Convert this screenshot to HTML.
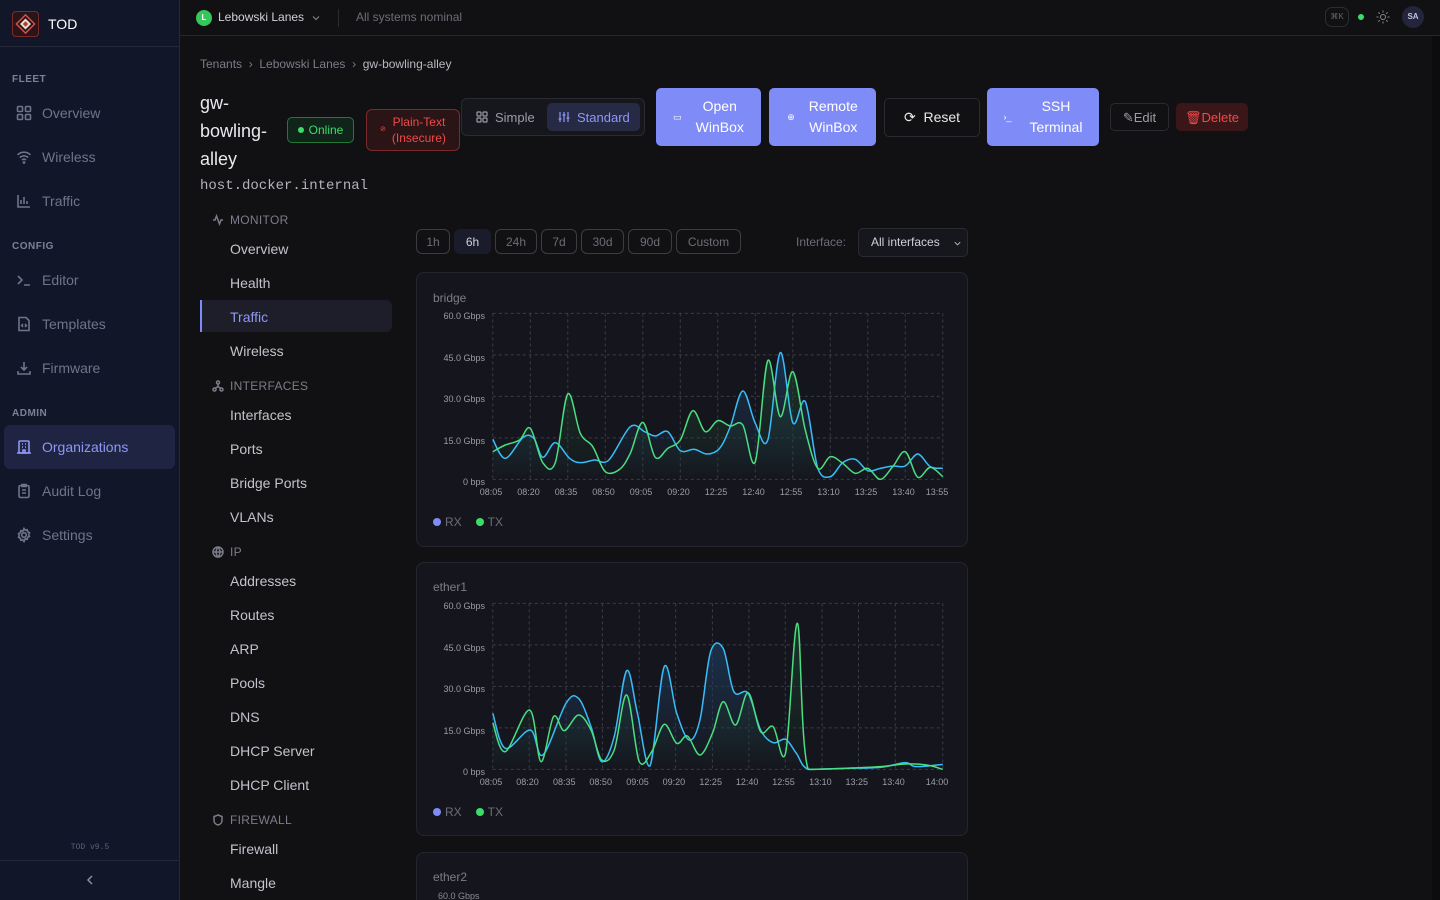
<!DOCTYPE html>
<html style="overflow:hidden"><head><meta charset="utf-8"><style>
*{box-sizing:border-box;margin:0;padding:0}
html,body{width:1440px;height:900px;overflow:hidden}
body{background:#111113;font-family:"Liberation Sans",sans-serif;color:#c9cad4;position:relative}
.abs{position:absolute}
#side{left:0;top:0;width:180px;height:900px;background:#111729;border-right:1px solid #23283a}
.sec{position:absolute;left:12px;font-size:10px;letter-spacing:.5px;color:#7c8296;font-weight:bold}
.ni{position:absolute;left:16px;font-size:14px;color:#6f7589;display:flex;align-items:center;gap:10px}
.ni svg{width:16px;height:16px;stroke:#6f7589;fill:none;stroke-width:1.6}
#top{left:180px;top:0;right:0;height:36px;border-bottom:1px solid #26262c}
.sub{position:absolute;left:230px;font-size:14px;color:#c2c3cc}
.subh{position:absolute;left:212px;font-size:12px;color:#7c7d8a;letter-spacing:.3px;display:flex;align-items:center;gap:6px}
.subh svg{width:12px;height:12px;stroke:#7c7d8a;fill:none;stroke-width:1.5}
.btn{position:absolute;border-radius:5px;font-size:14px;display:flex;align-items:center;justify-content:center;text-align:center;line-height:21px}
.pb{background:#7f8cf7;color:#fff}
.tr{position:absolute;top:229px;height:25px;border:1px solid #3c3d44;border-radius:6px;font-size:12px;color:#6c6d77;display:flex;align-items:center;justify-content:center}
.card{position:absolute;left:416px;width:552px;background:#15161d;border:1px solid #24252e;border-radius:8px}
.ct{position:absolute;left:16px;font-size:12px;color:#7c7d8a}
.lg{position:absolute;left:16px;font-size:12px;color:#6c6d77;display:flex;gap:14px}
.lg span::before{content:"";display:inline-block;width:8px;height:8px;border-radius:50%;margin-right:4px;background:var(--c)}
.ax{position:absolute;font-size:9px;color:#9a9ba6;white-space:nowrap}
</style></head><body>
<div id="side" class="abs">
 <div class="abs" style="left:0;top:0;width:179px;height:47px;border-bottom:1px solid #23283a"></div>
 <div class="abs" style="left:12px;top:11px;width:27px;height:26px;border:1.5px solid #7a2a2a;border-radius:4px;background:#2a1418"></div>
 <svg class="abs" style="left:14px;top:13px" width="23" height="22" viewBox="0 0 24 24"><path d="M12 2L22 12 12 22 2 12Z" fill="none" stroke="#d9534f" stroke-width="1.5"/><path d="M12 6L18 12 12 18 6 12Z" fill="#e8e0d0"/><path d="M12 9L15 12 12 15 9 12Z" fill="#c0392b"/></svg>
 <div class="abs" style="left:48px;top:16px;font-size:14px;color:#fff">TOD</div>
 <div class="sec" style="top:74px">FLEET</div>
 <div class="ni" style="top:105px"><svg viewBox="0 0 16 16"><rect x="1.5" y="1.5" width="5" height="5" rx="1"/><rect x="9.5" y="1.5" width="5" height="5" rx="1"/><rect x="1.5" y="9.5" width="5" height="5" rx="1"/><rect x="9.5" y="9.5" width="5" height="5" rx="1"/></svg>Overview</div>
 <div class="ni" style="top:149px"><svg viewBox="0 0 16 16"><path d="M1.5 6a9 9 0 0 1 13 0M3.8 8.6a6 6 0 0 1 8.4 0M6 11a3 3 0 0 1 4 0"/><circle cx="8" cy="13.5" r=".6"/></svg>Wireless</div>
 <div class="ni" style="top:193px"><svg viewBox="0 0 16 16"><path d="M2 2v12h12M5 11V7M8 11V4M11 11V8"/></svg>Traffic</div>
 <div class="sec" style="top:241px">CONFIG</div>
 <div class="ni" style="top:272px"><svg viewBox="0 0 16 16"><path d="M2 4l4 4-4 4M8 13h6"/></svg>Editor</div>
 <div class="ni" style="top:316px"><svg viewBox="0 0 16 16"><path d="M3 1.5h7l3 3v10H3z"/><path d="M7 8l-1.3 1.5L7 11M9 8l1.3 1.5L9 11"/></svg>Templates</div>
 <div class="ni" style="top:360px"><svg viewBox="0 0 16 16"><path d="M8 2v8M5 7l3 3 3-3M2 11v3h12v-3"/></svg>Firmware</div>
 <div class="sec" style="top:408px">ADMIN</div>
 <div class="abs" style="left:4px;top:425px;width:171px;height:44px;background:#1e2442;border-radius:6px"></div>
 <div class="ni" style="top:439px;color:#8e98f5"><svg viewBox="0 0 16 16" style="stroke:#8e98f5"><rect x="3" y="2" width="10" height="12" rx="1"/><path d="M1 14h14M6 5h1M9 5h1M6 8h1M9 8h1M7 14v-3h2v3"/></svg>Organizations</div>
 <div class="ni" style="top:483px"><svg viewBox="0 0 16 16"><rect x="3" y="2.5" width="10" height="12" rx="1.5"/><path d="M6 1.5h4v2H6zM6 7h4M6 10h4"/></svg>Audit Log</div>
 <div class="ni" style="top:527px"><svg viewBox="0 0 16 16"><circle cx="8" cy="8" r="2.3"/><path d="M8 1.5l1.2 1.7 2-.5.4 2 1.9.9-.8 1.9.8 1.9-1.9.9-.4 2-2-.5L8 14.5l-1.2-1.7-2 .5-.4-2-1.9-.9.8-1.9-.8-1.9 1.9-.9.4-2 2 .5z"/></svg>Settings</div>
 <div class="abs" style="left:0;width:180px;top:843px;text-align:center;font-family:'Liberation Mono',monospace;font-size:8px;color:#5c6276">TOD v9.5</div>
 <div class="abs" style="left:0;top:860px;width:179px;border-top:1px solid #23283a"></div>
 <svg class="abs" style="left:84px;top:874px" width="12" height="12" viewBox="0 0 12 12"><path d="M8 2L4 6l4 4" stroke="#8a90a4" fill="none" stroke-width="1.5"/></svg>
</div>
<div id="top" class="abs">
 <div class="abs" style="left:16px;top:10px;width:16px;height:16px;border-radius:50%;background:#35c759;color:#fff;font-size:8px;font-weight:bold;text-align:center;line-height:16px">L</div>
 <div class="abs" style="left:38px;top:10px;font-size:12px;color:#d0d1d8">Lebowski Lanes</div>
 <svg class="abs" style="left:131px;top:13px" width="10" height="10" viewBox="0 0 10 10"><path d="M2 3.5l3 3 3-3" stroke="#888" fill="none"/></svg>
 <div class="abs" style="left:158px;top:9px;width:1px;height:18px;background:#2a2a30"></div>
 <div class="abs" style="left:176px;top:10px;font-size:12px;color:#6c6d77">All systems nominal</div>
 <div class="abs" style="left:1145px;top:7px;width:24px;height:20px;border:1px solid #2c2c33;border-radius:7px;font-size:8px;color:#666;text-align:center;line-height:18px">⌘K</div>
 <div class="abs" style="left:1178px;top:14px;width:6px;height:6px;border-radius:50%;background:#3ddc6a"></div>
 <svg class="abs" style="left:1196px;top:10px" width="14" height="14" viewBox="0 0 14 14" stroke="#888" fill="none"><circle cx="7" cy="7" r="2.5"/><path d="M7 0.5v2M7 11.5v2M0.5 7h2M11.5 7h2M2.4 2.4l1.4 1.4M10.2 10.2l1.4 1.4M2.4 11.6l1.4-1.4M10.2 3.8l1.4-1.4"/></svg>
 <div class="abs" style="left:1222px;top:6px;width:22px;height:22px;border-radius:50%;background:#23253d;color:#c0c3dc;font-size:8px;font-weight:bold;text-align:center;line-height:22px">SA</div>
</div>
<div class="abs" style="left:1432px;top:36px;width:8px;height:864px;background:#0c0c0e"></div>
<div class="abs" style="left:200px;top:57px;font-size:12px;color:#7c7d8a">Tenants &nbsp;›&nbsp; Lebowski Lanes &nbsp;›&nbsp; <span style="color:#b8b9c2">gw-bowling-alley</span></div>
<div class="abs" style="left:200px;top:89px;font-size:18px;color:#e8e9ee;line-height:28px">gw-<br>bowling-<br>alley</div>
<div class="abs" style="left:200px;top:178px;font-family:'Liberation Mono',monospace;font-size:14px;color:#b2b3bc">host.docker.internal</div>
<div class="abs" style="left:287px;top:117px;width:67px;height:26px;border:1px solid #1f7a3a;background:#10241a;border-radius:5px;font-size:12px;color:#3ddc6a;display:flex;align-items:center;justify-content:center;gap:5px"><span style="width:6px;height:6px;border-radius:50%;background:#3ddc6a"></span>Online</div>
<div class="abs" style="left:366px;top:109px;width:94px;height:42px;border:1px solid #7a2a2a;background:#2a1416;border-radius:6px;font-size:12px;color:#f04a4a;display:flex;align-items:center;justify-content:center;gap:6px;line-height:16px;text-align:center"><span style="font-size:7px">⊘</span><span>Plain-Text<br>(Insecure)</span></div>
<div class="abs" style="left:461px;top:98px;width:184px;height:38px;border:1px solid #2a2a32;background:#16171d;border-radius:6px"></div>
<svg class="abs" style="left:476px;top:111px" width="12" height="12" viewBox="0 0 12 12" fill="none" stroke="#9c9da8" stroke-width="1.2"><rect x="1" y="1" width="4" height="4" rx=".8"/><rect x="7" y="1" width="4" height="4" rx=".8"/><rect x="1" y="7" width="4" height="4" rx=".8"/><rect x="7" y="7" width="4" height="4" rx=".8"/></svg>
<div class="abs" style="left:495px;top:110px;font-size:13px;color:#9c9da8">Simple</div>
<div class="abs" style="left:547px;top:103px;width:93px;height:28px;background:#262a45;border-radius:5px"></div>
<svg class="abs" style="left:558px;top:111px" width="12" height="12" viewBox="0 0 12 12" fill="none" stroke="#8e98f5" stroke-width="1.2"><path d="M2 1v10M6 1v10M10 1v10M0.5 8h3M4.5 4h3M8.5 7h3"/></svg>
<div class="abs" style="left:577px;top:110px;font-size:13px;color:#8e98f5">Standard</div>
<div class="btn pb" style="left:656px;top:88px;width:105px;height:58px"><span style="font-size:9px;margin-right:14px">▭</span>Open<br>WinBox</div>
<div class="btn pb" style="left:769px;top:88px;width:107px;height:58px"><span style="font-size:9px;margin-right:14px">⊕</span>Remote<br>WinBox</div>
<div class="btn" style="left:884px;top:98px;width:96px;height:39px;border:1px solid #2a2a32;color:#e8e9ee">⟳&nbsp; Reset</div>
<div class="btn pb" style="left:987px;top:88px;width:112px;height:58px"><span style="font-size:9px;margin-right:18px">›_</span>SSH<br>Terminal</div>
<div class="btn" style="left:1110px;top:103px;width:59px;height:28px;border:1px solid #2a2a32;color:#9c9da8;font-size:13px">✎Edit</div>
<div class="btn" style="left:1176px;top:103px;width:72px;height:28px;background:#3a1618;color:#f04a4a;font-size:13px">🗑︎Delete</div>

<div class="subh" style="top:213px"><svg viewBox="0 0 12 12"><path d="M1 6h2l1.5-4 3 8L9 6h2"/></svg>MONITOR</div>
<div class="sub" style="top:241px">Overview</div>
<div class="sub" style="top:275px">Health</div>
<div class="abs" style="left:200px;top:300px;width:192px;height:32px;background:#1d1e29;border-radius:0 6px 6px 0;border-left:2px solid #7f8cf7"></div>
<div class="sub" style="top:309px;color:#8e98f5">Traffic</div>
<div class="sub" style="top:343px">Wireless</div>
<div class="subh" style="top:379px"><svg viewBox="0 0 12 12"><circle cx="6" cy="2.5" r="1.5"/><circle cx="2.5" cy="9.5" r="1.5"/><circle cx="9.5" cy="9.5" r="1.5"/><path d="M6 4v2.5M6 6.5L3 8.5M6 6.5l3 2"/></svg>INTERFACES</div>
<div class="sub" style="top:407px">Interfaces</div>
<div class="sub" style="top:441px">Ports</div>
<div class="sub" style="top:475px">Bridge Ports</div>
<div class="sub" style="top:509px">VLANs</div>
<div class="subh" style="top:545px"><svg viewBox="0 0 12 12"><circle cx="6" cy="6" r="5"/><path d="M1 6h10M6 1c-2.5 3-2.5 7 0 10M6 1c2.5 3 2.5 7 0 10"/></svg>IP</div>
<div class="sub" style="top:573px">Addresses</div>
<div class="sub" style="top:607px">Routes</div>
<div class="sub" style="top:641px">ARP</div>
<div class="sub" style="top:675px">Pools</div>
<div class="sub" style="top:709px">DNS</div>
<div class="sub" style="top:743px">DHCP Server</div>
<div class="sub" style="top:777px">DHCP Client</div>
<div class="subh" style="top:813px"><svg viewBox="0 0 12 12"><path d="M6 1L10 2.5v4C10 9 8 10.5 6 11 4 10.5 2 9 2 6.5v-4z"/></svg>FIREWALL</div>
<div class="sub" style="top:841px">Firewall</div>
<div class="sub" style="top:875px">Mangle</div>

<div class="tr" style="left:416px;width:34px">1h</div>
<div class="tr" style="left:454px;width:37px;background:#1a1c2c;border-color:#1a1c2c;color:#d0d1d8">6h</div>
<div class="tr" style="left:495px;width:42px">24h</div>
<div class="tr" style="left:541px;width:36px">7d</div>
<div class="tr" style="left:581px;width:43px">30d</div>
<div class="tr" style="left:628px;width:44px">90d</div>
<div class="tr" style="left:676px;width:65px">Custom</div>
<div class="abs" style="left:796px;top:235px;font-size:12px;color:#6c6d77">Interface:</div>
<div class="abs" style="left:858px;top:228px;width:110px;height:29px;border:1px solid #2a2a32;background:#16171d;border-radius:5px;font-size:12px;color:#d0d1d8;line-height:27px;padding-left:12px">All interfaces<svg style="position:absolute;right:5px;top:10px" width="9" height="9" viewBox="0 0 10 10"><path d="M2 3.5l3 3 3-3" stroke="#bbb" fill="none"/></svg></div>

<div class="card" style="top:272px;height:275px"><div class="ct" style="top:18px">bridge</div><div class="lg" style="top:242px"><span style="--c:#7f8cf7">RX</span><span style="--c:#3ddc6a">TX</span></div></div>
<div class="card" style="top:562px;height:274px"><div class="ct" style="top:17px">ether1</div><div class="lg" style="top:242px"><span style="--c:#7f8cf7">RX</span><span style="--c:#3ddc6a">TX</span></div></div>
<div class="card" style="top:852px;height:60px"><div class="ct" style="top:17px">ether2</div><div class="abs" style="left:21px;top:38px;font-size:9px;color:#8a8b95">60.0 Gbps</div></div>

<div id="charts"></div>
<script>
function smooth(pts,y0){var p=pts.trim().split(/\s+/).map(function(s){return s.split(',').map(Number)});var c=function(v){return Math.min(v,y0)};var d='M'+p[0][0]+' '+p[0][1];for(var i=0;i<p.length-1;i++){var p0=p[i-1]||p[i],p1=p[i],p2=p[i+1],p3=p[i+2]||p2;var t=6;d+=' C'+(p1[0]+(p2[0]-p0[0])/t)+' '+c(p1[1]+(p2[1]-p0[1])/t)+' '+(p2[0]-(p3[0]-p1[0])/t)+' '+c(p2[1]-(p3[1]-p1[1])/t)+' '+p2[0]+' '+p2[1];}return {d:d,p:p};}
function chart(left,top,y60,y0,xs,labels,blue,green){
 var s=2.8,ys=3;var w=560,h=260;
 var html='<svg class="abs" style="left:'+left+'px;top:'+top+'px" width="'+w+'" height="'+h+'" viewBox="0 0 '+(w*s)+' '+(h*ys)+'" preserveAspectRatio="none">';
 html+='<defs><linearGradient id="g'+top+'" x1="0" y1="0" x2="0" y2="1"><stop offset="0" stop-color="#1e3a5a" stop-opacity=".75"/><stop offset="1" stop-color="#1e3a5a" stop-opacity="0"/></linearGradient><linearGradient id="h'+top+'" x1="0" y1="0" x2="0" y2="1"><stop offset="0" stop-color="#1f4a32" stop-opacity=".6"/><stop offset="1" stop-color="#1f4a32" stop-opacity="0"/></linearGradient></defs>';
 var g='';for(var k=0;k<5;k++){var y=y60+(y0-y60)*k/4;g+='M215 '+y+'H1475';}
 xs.forEach(function(x){g+='M'+x+' '+y60+'V'+y0;});
 html+='<path d="'+g+'" stroke="#3a3c4a" fill="none" vector-effect="non-scaling-stroke" style="stroke-width:1;stroke-dasharray:3 3"/>';
 var b=smooth(blue,y0),gr=smooth(green,y0);
 html+='<path d="'+b.d+' L1475 '+y0+' L215 '+y0+'Z" fill="url(#g'+top+')"/>';
 html+='<path d="'+gr.d+' L1475 '+y0+' L215 '+y0+'Z" fill="url(#h'+top+')"/>';
 html+='<path d="'+b.d+'" fill="none" stroke="#38bdf8" stroke-width="1.5" vector-effect="non-scaling-stroke"/>';
 html+='<path d="'+gr.d+'" fill="none" stroke="#4ade80" stroke-width="1.5" vector-effect="non-scaling-stroke"/>';
 html+='</svg>';
 var yl=['60.0 Gbps','45.0 Gbps','30.0 Gbps','15.0 Gbps','0 bps'];
 yl.forEach(function(t,k){var y=top+(y60+(y0-y60)*k/4)/ys;html+='<div class="ax" style="right:'+(1440-left-69)+'px;top:'+(y-2)+'px">'+t+'</div>';});
 labels.forEach(function(t,k){var x=left+xs[k]/s;var last=k==labels.length-1;html+='<div class="ax" style="left:'+(x-13+(last?-4:0))+'px;top:'+(top+y0/ys+8)+'px">'+t+'</div>';});
 document.getElementById('charts').insertAdjacentHTML('beforeend',html);
}
chart(416,280,100,598,[215,320,425,530,635,740,845,950,1055,1160,1265,1370,1475],
['08:05','08:20','08:35','08:50','09:05','09:20','12:25','12:40','12:55','13:10','13:25','13:40','13:55'],
"215,478 250,535 300,472 330,475 355,532 390,488 430,535 460,548 500,540 540,540 600,440 640,455 670,468 705,455 740,512 780,508 815,522 850,505 880,440 915,333 950,430 985,480 1020,218 1055,428 1090,365 1125,565 1160,590 1195,548 1230,538 1265,572 1300,565 1335,558 1370,558 1405,522 1440,560 1475,565",
"215,515 250,495 290,480 320,445 355,548 390,548 425,342 460,460 495,500 530,575 570,568 600,520 635,427 670,532 705,505 740,480 775,392 810,455 845,422 880,438 915,435 950,545 985,242 1020,410 1055,275 1090,450 1125,565 1160,530 1195,550 1230,580 1265,565 1300,598 1335,560 1370,515 1405,592 1440,562 1475,590");
chart(416,580,70,568,[215,317,420,522,625,727,830,932,1034,1137,1239,1342,1475],
['08:05','08:20','08:35','08:50','09:05','09:20','12:25','12:40','12:55','13:10','13:25','13:40','14:00'],
"215,400 250,505 320,450 355,525 420,370 455,355 490,440 520,545 555,470 590,272 620,400 655,558 695,260 730,400 765,480 795,420 825,215 860,205 890,335 930,340 965,450 1000,488 1035,478 1065,520 1100,568 1200,565 1300,562 1370,548 1400,560 1475,553",
"215,428 250,515 318,390 350,545 385,410 415,452 455,405 490,450 520,540 555,510 590,345 625,545 660,515 695,433 730,490 760,468 795,525 830,460 860,365 895,435 930,338 965,455 1000,440 1035,518 1068,130 1098,568 1200,565 1300,560 1370,552 1430,555 1475,568");
</script>
</body></html>
